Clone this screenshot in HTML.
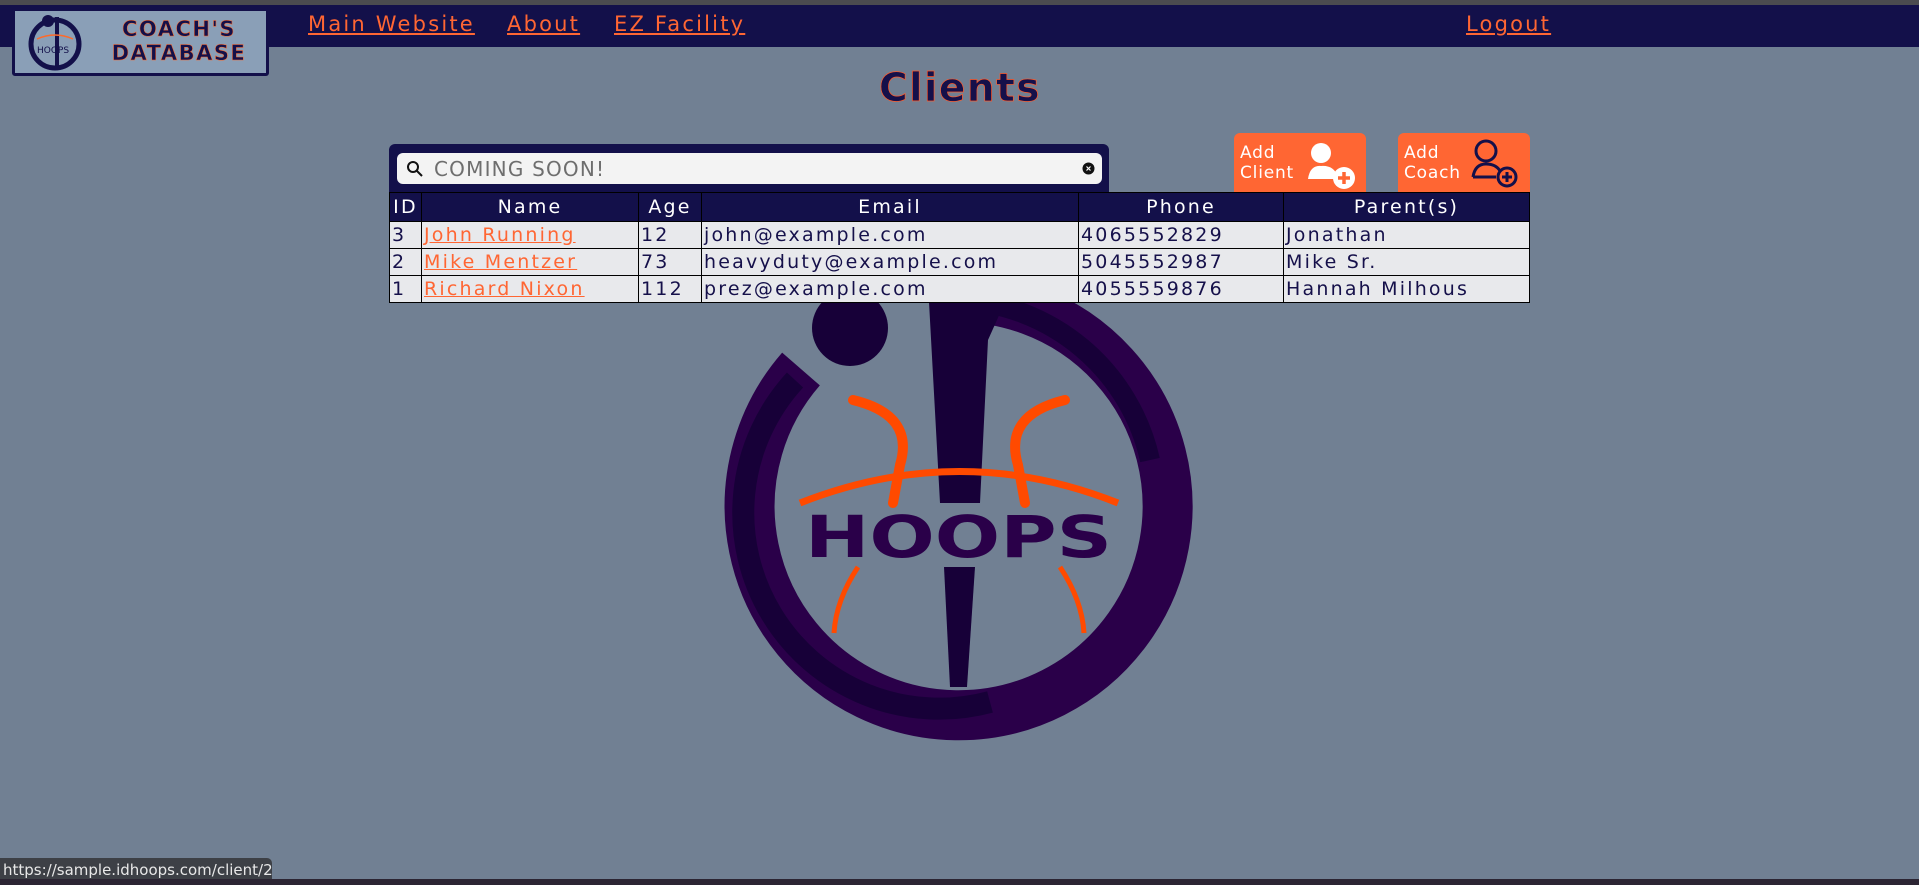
<!DOCTYPE html>
<html><head><meta charset="utf-8"><style>
*{margin:0;padding:0;box-sizing:border-box}
body{width:1919px;height:885px;background:#718093;position:relative;overflow:hidden;font-family:"DejaVu Sans","Liberation Sans",sans-serif}
.top{position:absolute;left:0;top:0;width:1919px;height:5px;background:#4b4b4f}
.hdr{position:absolute;left:0;top:5px;width:1919px;height:42px;background:#13104a}
.logo{position:absolute;left:12px;top:8px;width:257px;height:68px;background:#8a9fb7;border:3px solid #13104a;border-radius:3px}
.logo .t{position:absolute;left:78px;font:bold 21px "DejaVu Sans",sans-serif;color:#13104a;-webkit-text-stroke:0.5px #ff6a2a;letter-spacing:1.5px;line-height:24px;text-align:center;width:172px}
.nav{position:absolute;top:12px;font-size:21px;color:#ff6633;text-decoration:underline;letter-spacing:2.2px;white-space:nowrap}
h1{position:absolute;left:860px;top:66px;width:200px;text-align:center;font:bold 39px "DejaVu Sans",sans-serif;color:#15104a;-webkit-text-stroke:0.7px #ff5a2a;letter-spacing:1.5px}
.panel{position:absolute;left:389px;top:144px;width:720px;height:50px;background:#13104a;border-radius:6px 6px 0 0}
.search{position:absolute;left:8px;top:9px;width:705px;height:31px;background:#f3f3f3;border-radius:6px}
.search span{position:absolute;left:37px;top:4px;font-size:20px;color:#6e6e6e;letter-spacing:1.2px;font-weight:500}
table{position:absolute;left:389px;top:192px;width:1141px;border-collapse:collapse;background:#e8e9ec;color:#15104a;font-size:19px;letter-spacing:2.2px;line-height:22px;font-weight:500}
td,th{border:1.5px solid #000;height:27px;padding:0 2px;white-space:nowrap;text-align:left}
th{background:#13104a;color:#fff;font-weight:500;text-align:center;height:29px}
td a{color:#ff6633;text-decoration:underline}
.btn{position:absolute;top:133px;width:132px;height:59px;background:#ff6633;border-radius:6px 6px 0 0;color:#fff;font-size:17px;line-height:20px;letter-spacing:0.8px;padding:10px 0 0 6px}
.status{position:absolute;left:0;top:858px;width:272px;height:23px;background:#3d4046;border-radius:0 5px 0 0;color:#e8e8e8;font:15px "DejaVu Sans",sans-serif;padding:3px 0 0 3px}
.bot{position:absolute;left:0;top:879px;width:1919px;height:6px;background:#2c2533}
</style></head><body>
<div class="top"></div>
<div class="hdr"></div>
<svg style="position:absolute;left:0;top:0" width="1919" height="885">
<path d="M801 369 A209 209 0 1 0 941 298" fill="none" stroke="#2a0049" stroke-width="50"/>
<path d="M795 380 A196 196 0 0 0 990 702" fill="none" stroke="#170038" stroke-width="22"/>
<path d="M960 300 A205 205 0 0 1 1150 460" fill="none" stroke="#170038" stroke-width="20"/>
<circle cx="850" cy="328" r="38" fill="#170038"/>
<polygon points="929,302 1005,302 988,340 980,503 940,503" fill="#170038"/>
<polygon points="944,567 975,567 967,687 950,687" fill="#170038"/>
<path d="M800 503 Q960 440 1118 503" fill="none" stroke="#ff4a00" stroke-width="7"/>
<path d="M853 400 Q915 415 900 465 L893 503" fill="none" stroke="#ff4a00" stroke-width="10" stroke-linecap="round"/>
<path d="M1065 400 Q1003 415 1018 465 L1025 503" fill="none" stroke="#ff4a00" stroke-width="10" stroke-linecap="round"/>
<path d="M858 567 Q836 600 834 633" fill="none" stroke="#ff4a00" stroke-width="5"/>
<path d="M1060 567 Q1082 600 1084 633" fill="none" stroke="#ff4a00" stroke-width="5"/>
<text x="805" y="557" textLength="307" lengthAdjust="spacingAndGlyphs" font-family="DejaVu Sans" font-weight="bold" font-size="58" fill="#2a0049">HOOPS</text>
</svg>
<div class="logo">
<svg style="position:absolute;left:8px;top:2px" width="64" height="60">
<circle cx="32" cy="31" r="24" fill="none" stroke="#13104a" stroke-width="5"/>
<circle cx="25" cy="8" r="6" fill="#13104a"/>
<rect x="32" y="4" width="4" height="52" fill="#13104a"/>
<path d="M14 26 Q32 18 50 26" fill="none" stroke="#ff6a2a" stroke-width="1.5"/>
<text x="14" y="40" font-size="9" font-family="DejaVu Sans" fill="#13104a">HOOPS</text>
</svg>
<div class="t" style="top:6px">COACH'S</div>
<div class="t" style="top:30px">DATABASE</div>
</div>
<a class="nav" style="left:308px">Main Website</a>
<a class="nav" style="left:507px">About</a>
<a class="nav" style="left:614px">EZ Facility</a>
<a class="nav" style="left:1466px">Logout</a>
<h1>Clients</h1>
<div class="panel"><div class="search">
<svg style="position:absolute;left:9px;top:7px" width="18" height="18"><circle cx="7" cy="7" r="5" fill="none" stroke="#111" stroke-width="2"/><line x1="11" y1="11" x2="16" y2="16" stroke="#111" stroke-width="2"/></svg>
<span>COMING SOON!</span>
<svg style="position:absolute;left:685px;top:9px" width="13" height="13"><circle cx="6.5" cy="6.5" r="6" fill="#111"/><path d="M4.5 4.5l4 4M8.5 4.5l-4 4" stroke="#fff" stroke-width="1.2"/></svg>
</div></div>
<table>
<tr><th style="width:32px">ID</th><th style="width:217px">Name</th><th style="width:63px">Age</th><th style="width:377px">Email</th><th style="width:205px">Phone</th><th>Parent(s)</th></tr>
<tr><td>3</td><td><a>John Running</a></td><td>12</td><td>john@example.com</td><td>4065552829</td><td>Jonathan</td></tr>
<tr><td>2</td><td><a>Mike Mentzer</a></td><td>73</td><td>heavyduty@example.com</td><td>5045552987</td><td>Mike Sr.</td></tr>
<tr><td>1</td><td><a>Richard Nixon</a></td><td>112</td><td>prez@example.com</td><td>4055559876</td><td>Hannah Milhous</td></tr>
</table>
<div class="btn" style="left:1234px">Add<br>Client
<svg style="position:absolute;left:72px;top:6px" width="56" height="52"><circle cx="15" cy="14" r="10" fill="#fff"/><path d="M2 40 Q4 26 15 27 Q28 26 32 38 L32 40 Z" fill="#fff"/><circle cx="38" cy="39" r="11" fill="#fff"/><path d="M38 33v12M32 39h12" stroke="#ff6633" stroke-width="3.5"/></svg></div>
<div class="btn" style="left:1398px">Add<br>Coach
<svg style="position:absolute;left:72px;top:4px" width="56" height="54"><circle cx="16" cy="14" r="10" fill="none" stroke="#13104a" stroke-width="3"/><path d="M3 40 Q5 27 16 27 Q26 27 30 34" fill="none" stroke="#13104a" stroke-width="3"/><path d="M3 40 H26" stroke="#13104a" stroke-width="3"/><circle cx="37" cy="40" r="9" fill="none" stroke="#13104a" stroke-width="3"/><path d="M37 35v10M32 40h10" stroke="#13104a" stroke-width="3"/></svg></div>
<div class="status">https://sample.idhoops.com/client/2</div>
<div class="bot"></div>
</body></html>
